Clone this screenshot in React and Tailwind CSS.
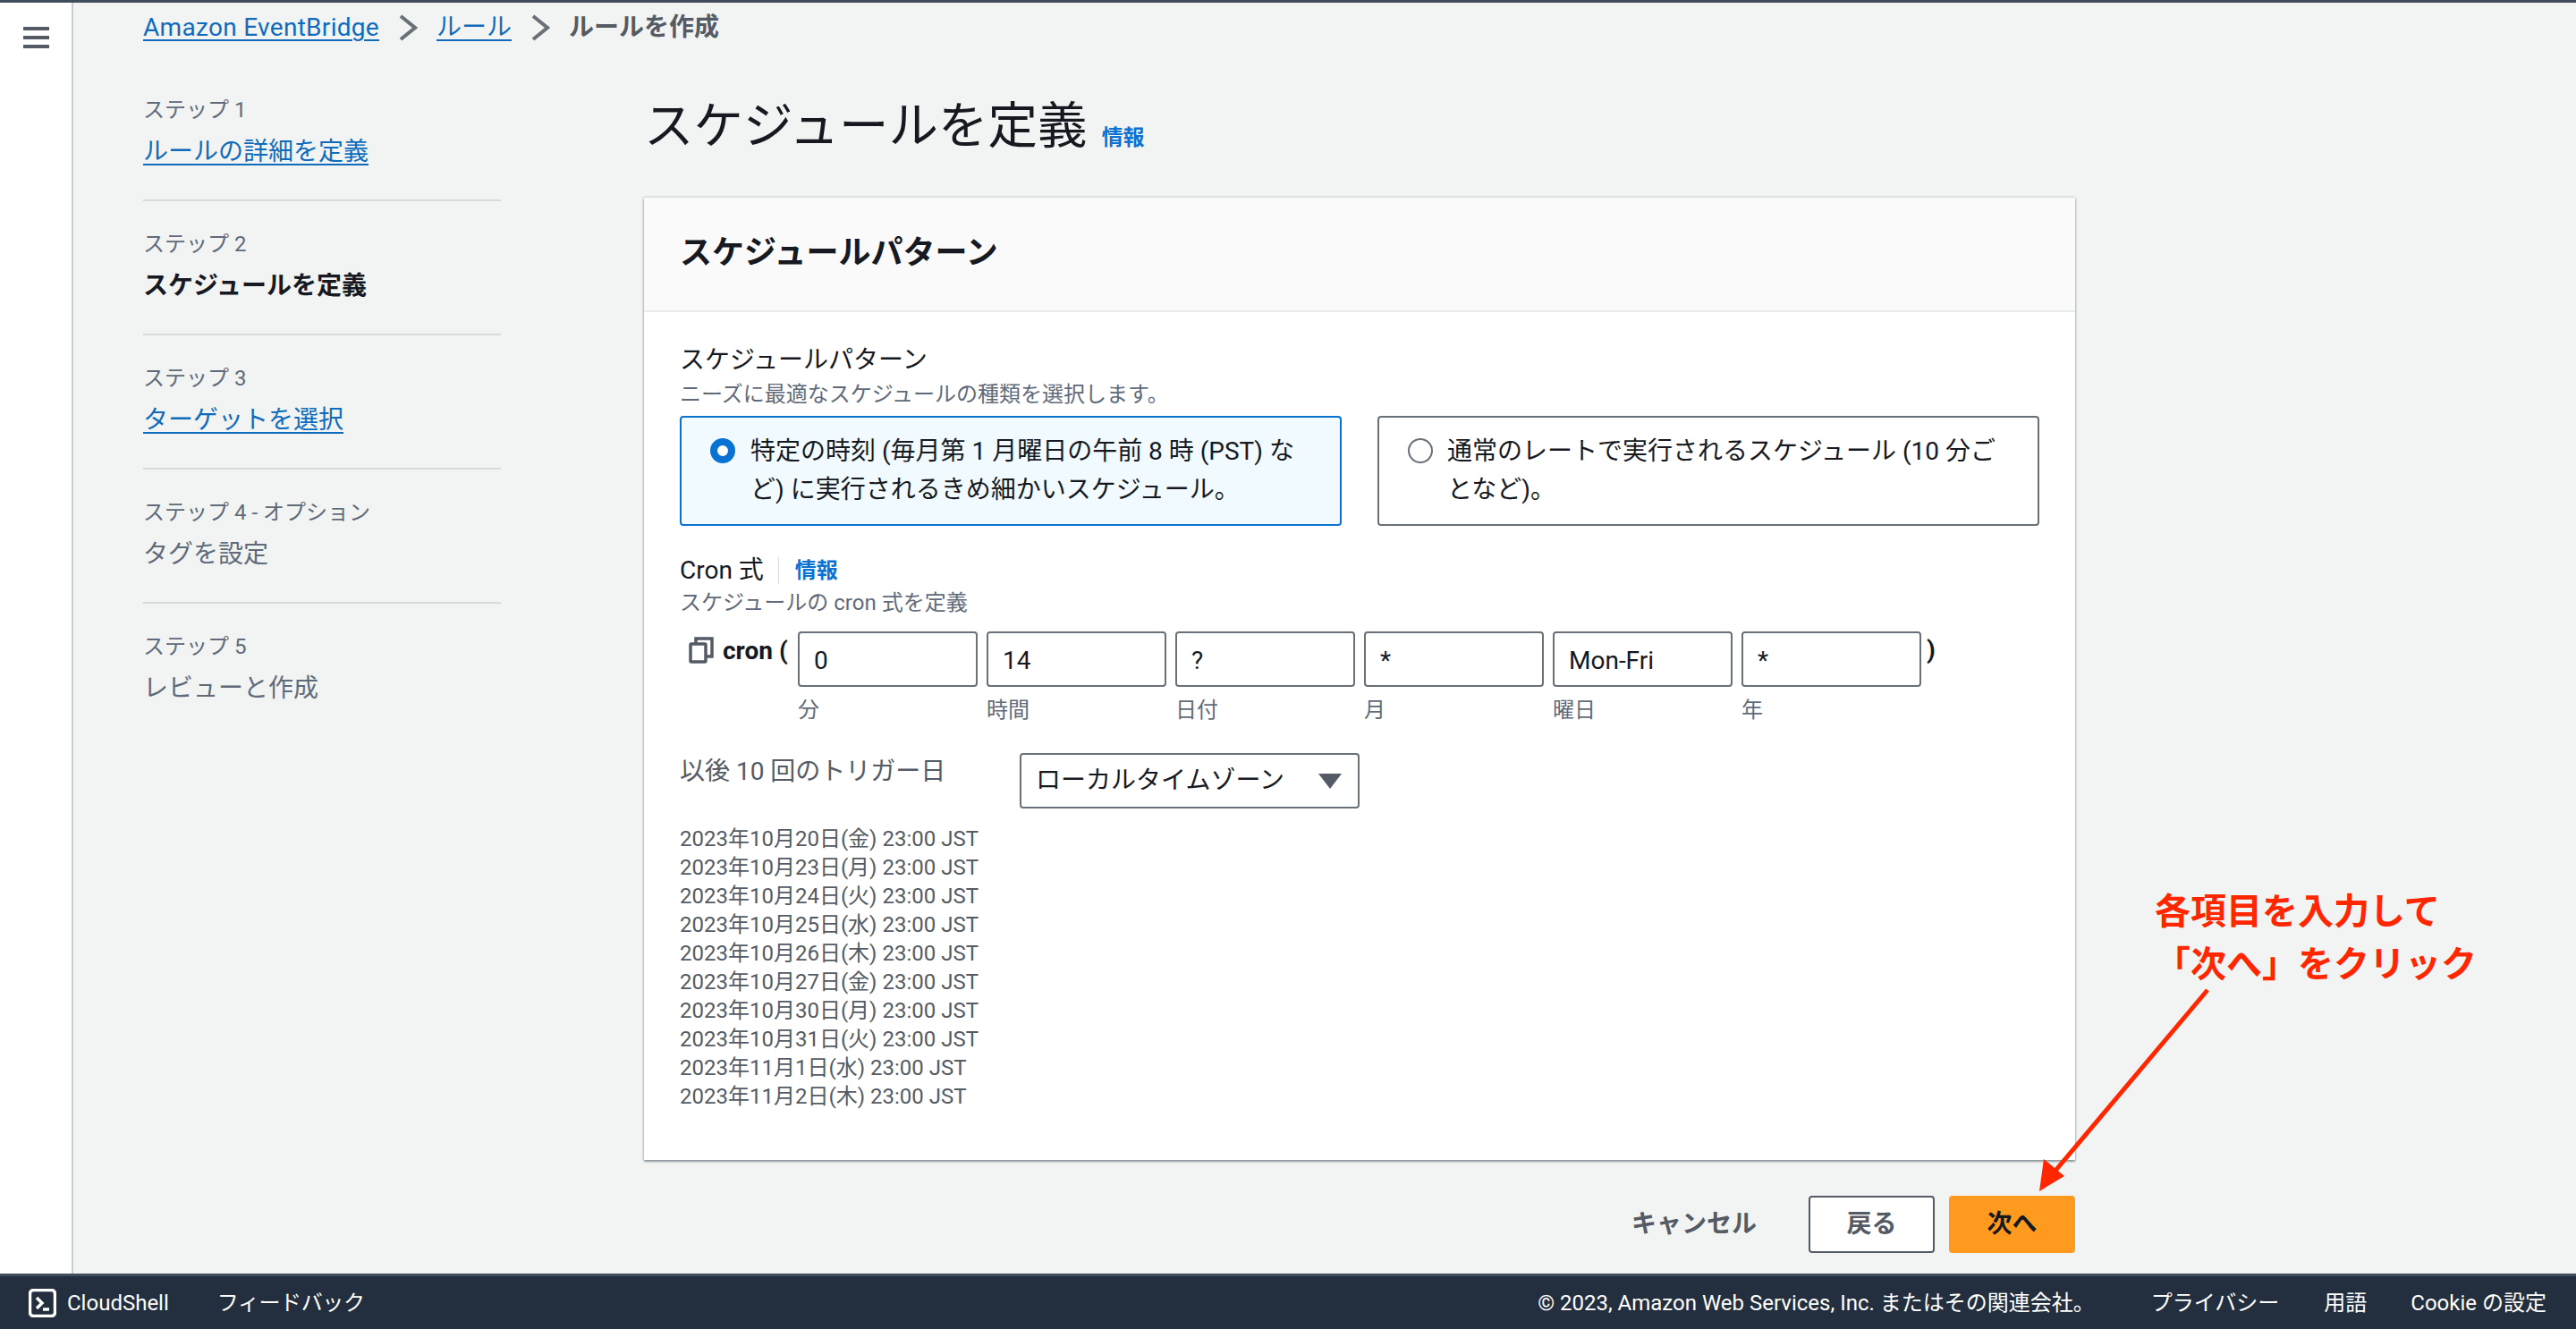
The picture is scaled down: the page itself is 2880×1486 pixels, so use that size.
const steps = [
  { label: "ステップ 1", title: "ルールの詳細を定義", kind: "link" },
  { label: "ステップ 2", title: "スケジュールを定義", kind: "active" },
  { label: "ステップ 3", title: "ターゲットを選択", kind: "link" },
  { label: "ステップ 4 - オプション", title: "タグを設定", kind: "off" },
  { label: "ステップ 5", title: "レビューと作成", kind: "off", last: true },
];
const fields = [
  ["0", "分"], ["14", "時間"], ["?", "日付"], ["*", "月"], ["Mon-Fri", "曜日"], ["*", "年"],
];
const dates = [
  "2023年10月20日(金) 23:00 JST", "2023年10月23日(月) 23:00 JST", "2023年10月24日(火) 23:00 JST",
  "2023年10月25日(水) 23:00 JST", "2023年10月26日(木) 23:00 JST", "2023年10月27日(金) 23:00 JST",
  "2023年10月30日(月) 23:00 JST", "2023年10月31日(火) 23:00 JST", "2023年11月1日(水) 23:00 JST",
  "2023年11月2日(木) 23:00 JST",
];

function Chevron() {
  return (
    <svg width="22" height="30" viewBox="0 0 22 30" fill="none" stroke="#687078" strokeWidth="4" className="shrink-0">
      <path d="M3 2l16 13L3 28" />
    </svg>
  );
}

export default function App() {
  return (
    <div className="relative w-[2880px] h-[1486px] overflow-hidden flex flex-col bg-[#f2f3f3] text-[#16191f] font-['Roboto','Noto_Sans_CJK_JP',sans-serif]">
      <div className="flex-1 min-h-0 flex border-t-[3px] border-[#414d5c]">
        <aside className="w-[82px] shrink-0 bg-white border-r-2 border-[#c6cdd0] pl-[26px] pt-[27px]">
          <svg width="29" height="24" viewBox="0 0 29 24" fill="#545b64">
            <rect x="0" y="0" width="29" height="4" />
            <rect x="0" y="10" width="29" height="4" />
            <rect x="0" y="20" width="29" height="4" />
          </svg>
        </aside>
        <div className="flex-1 pl-[78px]">
          <nav className="h-[46px] pt-[10px] flex items-center gap-[21px] text-[28px] leading-[36px]">
            <a className="text-[#0f6cbd] underline underline-offset-[4px] decoration-2 tracking-[0.3px]">Amazon EventBridge</a>
            <Chevron />
            <a className="text-[#0f6cbd] underline underline-offset-[4px] decoration-2">ルール</a>
            <Chevron />
            <span className="font-bold text-[#545b64]">ルールを作成</span>
          </nav>
          <div className="flex">
            <ol className="w-[400px] shrink-0 pt-[56px]">
              {steps.map((s) => (
                <li key={s.label} className={s.last ? "" : "pb-[33px] border-b-2 border-[#d5dbdb] mb-[30px]"}>
                  <div className="text-[24px] leading-[36px] text-[#5f6b7a] mb-[9px]">{s.label}</div>
                  <div
                    className={
                      "text-[28px] leading-[40px] " +
                      (s.kind === "link"
                        ? "text-[#0f6cbd] underline underline-offset-[4px] decoration-2"
                        : s.kind === "active"
                        ? "font-bold text-[#16191f]"
                        : "text-[#5f6b7a]")
                    }
                  >
                    {s.title}
                  </div>
                </li>
              ))}
            </ol>
            <main className="ml-[160px] w-[1600px] pt-[55px]">
              <div className="flex items-start gap-[16px] h-[72px]">
                <h1 className="text-[55.5px] leading-[72px] mt-[2px]">スケジュールを定義</h1>
                <a className="text-[24px] leading-[32px] font-bold text-[#0972d3] mt-[34px]">情報</a>
              </div>
              <section className="mt-[45px] h-[1076px] bg-white shadow-[0_2px_2px_rgba(0,28,36,0.35),0_0_3px_rgba(0,28,36,0.3)]">
                <header className="h-[128px] bg-[#fafafa] border-b-2 border-[#eaeded] pl-[40px] pt-[40px]">
                  <h2 className="text-[36px] leading-[44px] font-bold">スケジュールパターン</h2>
                </header>
                <div className="px-[40px] pt-[36px]">
                  <div className="text-[28px] leading-[36px]">スケジュールパターン</div>
                  <div className="text-[24px] leading-[32px] text-[#5f6b7a] mt-[4px]">ニーズに最適なスケジュールの種類を選択します。</div>
                  <div className="grid grid-cols-2 gap-[40px] mt-[8px]">
                    <div className="h-[123px] rounded-[4px] border-2 border-[#0972d3] bg-[#f1faff] flex pl-[32px] pt-[16px] text-[28px] leading-[43px]">
                      <span className="mt-[7px] w-[28px] h-[28px] rounded-full border-[8px] border-[#0972d3] bg-white shrink-0" />
                      <span className="ml-[17px] whitespace-nowrap">特定の時刻 (毎月第 1 月曜日の午前 8 時 (PST) な<br />ど) に実行されるきめ細かいスケジュール。</span>
                    </div>
                    <div className="h-[123px] rounded-[4px] border-2 border-[#687078] bg-white flex pl-[32px] pt-[16px] text-[28px] leading-[43px]">
                      <span className="mt-[7px] w-[28px] h-[28px] rounded-full border-2 border-[#687078] bg-white shrink-0" />
                      <span className="ml-[16px] whitespace-nowrap">通常のレートで実行されるスケジュール (10 分ご<br />となど)。</span>
                    </div>
                  </div>
                  <div className="mt-[32px] flex items-center h-[36px] text-[28px] leading-[36px]">
                    <span>Cron 式</span>
                    <span className="ml-[16px] w-px h-[30px] bg-[#d5dbdb]" />
                    <a className="ml-[18px] text-[24px] font-bold text-[#0972d3]">情報</a>
                  </div>
                  <div className="text-[24px] leading-[32px] text-[#5f6b7a] mt-[2px]">スケジュールの cron 式を定義</div>
                  <div className="flex mt-[16px]">
                    <div className="w-[132px] shrink-0 pl-[10px] pt-[4px] flex items-start">
                      <svg width="28" height="30" viewBox="0 0 28 30" fill="none" stroke="#545b64" strokeWidth="3.5" className="mt-[2px] shrink-0">
                        <rect x="2" y="8" width="17" height="20" rx="1" />
                        <path d="M8 7V2h18v20h-6" />
                      </svg>
                      <span className="ml-[10px] text-[28px] leading-[36px] font-bold whitespace-nowrap">cron (</span>
                    </div>
                    <div className="flex gap-[10px]">
                      {fields.map(([v, l]) => (
                        <div key={l} className="w-[201px]">
                          <input
                            readOnly
                            value={v}
                            className="w-full h-[62px] rounded-[4px] border-2 border-[#687078] bg-white pl-[16px] pr-[16px] pt-[3px] text-[28px] outline-none"
                          />
                          <div className="text-[24px] leading-[32px] text-[#5f6b7a] mt-[10px]">{l}</div>
                        </div>
                      ))}
                    </div>
                    <span className="ml-[6px] mt-[3px] text-[28px] leading-[36px] font-bold">)</span>
                  </div>
                  <div className="flex mt-[32px]">
                    <div className="w-[380px] text-[28px] leading-[36px] text-[#545b64] mt-[3px]">以後 10 回のトリガー日</div>
                    <div className="w-[380px] h-[62px] rounded-[4px] border-2 border-[#687078] bg-white flex items-center justify-between pl-[16px] pr-[18px] text-[28px]">
                      <span>ローカルタイムゾーン</span>
                      <svg width="26" height="17" viewBox="0 0 26 17" fill="#545b64">
                        <path d="M0 0h26L13 17z" />
                      </svg>
                    </div>
                  </div>
                  <div className="mt-[18px] text-[24px] leading-[32px] text-[#545b64]">
                    {dates.map((d) => (
                      <div key={d}>{d}</div>
                    ))}
                  </div>
                </div>
              </section>
              <div className="mt-[40px] flex justify-end items-center text-[28px] font-bold">
                <span className="mr-[58px] text-[#545b64]">キャンセル</span>
                <button className="w-[141px] h-[64px] rounded-[4px] border-2 border-[#545b64] bg-white text-[#545b64]">戻る</button>
                <button className="ml-[16px] w-[141px] h-[64px] rounded-[4px] bg-[#fe9a1e] text-[#16191f]">次へ</button>
              </div>
            </main>
          </div>
        </div>
      </div>
      <footer className="h-[62px] shrink-0 bg-[#232f3e] border-t-[3px] border-[#414d5c] flex items-center justify-between pl-[32px] pr-[33px] text-[24px] text-white">
        <div className="flex items-center">
          <svg width="31" height="32" viewBox="0 0 31 32" fill="none" stroke="#fff" strokeWidth="3.5">
            <rect x="1.5" y="1.5" width="28" height="29" rx="4" />
            <path d="M9 10l6 6-6 6" />
            <path d="M16 23h7" />
          </svg>
          <span className="ml-[12px]">CloudShell</span>
          <span className="ml-[54px] tracking-[-0.4px]">フィードバック</span>
        </div>
        <div className="flex items-center">
          <span>© 2023, Amazon Web Services, Inc. またはその関連会社。</span>
          <span className="ml-[63px]">プライバシー</span>
          <span className="ml-[50px]">用語</span>
          <span className="ml-[49px]">Cookie の設定</span>
        </div>
      </footer>
      <div className="absolute left-[2409px] top-[990px] text-[40px] leading-[59px] font-bold text-[#ff2600] whitespace-nowrap">
        各項目を入力して<br />「次へ」をクリック
      </div>
      <svg className="absolute left-[2260px] top-[1100px]" width="220" height="240" viewBox="0 0 220 240" fill="none">
        <path d="M208 7L32 216" stroke="#ff2600" strokeWidth="5" />
        <path d="M20 232L25 196L48 215z" fill="#ff2600" />
      </svg>
    </div>
  );
}
